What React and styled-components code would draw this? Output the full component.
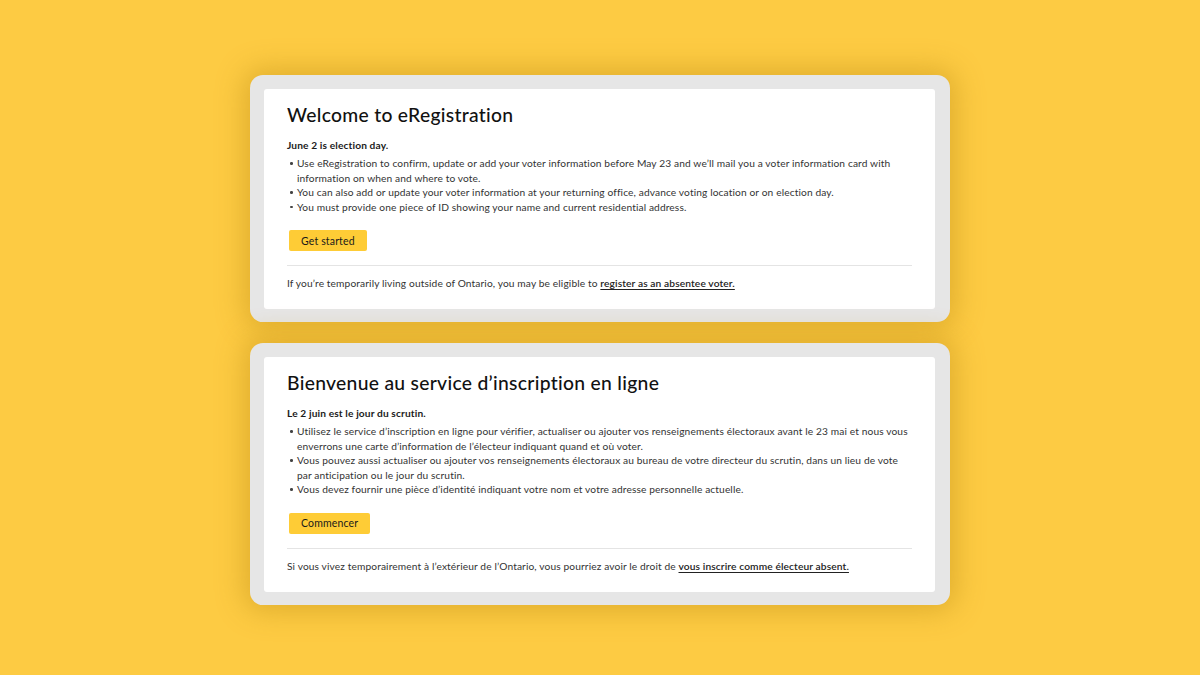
import React from 'react'
import styled, {createGlobalStyle} from 'styled-components'

const GlobalStyle = createGlobalStyle`
    html, body {
        margin: 0;
        padding: 0;
        background: #fdcb43;
    }
    body {
        font-family: "Lato", "Open Sans", sans-serif;
        color: #1a1a1a;
    }
`

const Page = styled.div`
    width: 1200px;
    height: 675px;
    background: #fdcb43;
    display: flex;
    flex-direction: column;
    align-items: center;
    padding-top: 75px;
    gap: 21px;
    box-sizing: border-box;
    overflow: hidden;
`

const Frame = styled.div`
    width: 700px;
    box-sizing: border-box;
    background: #e6e6e6;
    border-radius: 13px;
    padding: 14px 15px 13px 14px;
    box-shadow: 0 0 28px 6px rgba(190, 140, 20, 0.45);
`

const Panel = styled.div`
    background: #fff;
    border-radius: 3px;
    padding: 14px 23px 19px 23px;
`

const Title = styled.h1`
    margin: 0 0 11px 0;
    font-family: "Lato", sans-serif;
    font-weight: 500;
    font-size: 19.3px;
    letter-spacing: 0.3px;
    color: #111;
    line-height: 24px;
`

const Lead = styled.p`
    margin: 0 0 4px 0;
    font-size: 10.2px;
    font-weight: 700;
    letter-spacing: 0.12px;
    line-height: 14px;
    color: #1b1b1b;
`

const List = styled.ul`
    margin: 0;
    padding: 0 0 0 10px;
    list-style: none;
`

const Item = styled.li`
    position: relative;
    font-size: 10.2px;
    letter-spacing: 0.12px;
    line-height: 14.5px;
    color: #333;
    &::before {
        content: "";
        position: absolute;
        left: -7px;
        top: 6px;
        width: 2.5px;
        height: 2.5px;
        border-radius: 50%;
        background: #444;
    }
`

const Button = styled.button`
    margin: 16px 0 14px 2px;
    background: #fecc36;
    border: none;
    border-radius: 2px;
    font-family: "Lato", sans-serif;
    font-size: 10.5px;
    letter-spacing: 0.15px;
    color: #1a1a1a;
    padding: 0 12px;
    height: 21px;
    cursor: pointer;
`

const Divider = styled.hr`
    border: none;
    border-top: 1px solid #e4e4e4;
    margin: 0 0 10px 0;
`

const Footer = styled.p`
    margin: 0;
    font-size: 10.2px;
    letter-spacing: 0.12px;
    line-height: 14px;
    color: #333;
`

const Link = styled.a`
    color: #222;
    font-weight: 600;
    text-decoration: underline;
    text-underline-offset: 2px;
`

export default function App() {
    return (
        <>
            <GlobalStyle />
            <Page>
                <Frame>
                    <Panel>
                        <Title>Welcome to eRegistration</Title>
                        <Lead>June 2 is election day.</Lead>
                        <List>
                            <Item>Use eRegistration to confirm, update or add your voter information before May 23 and we’ll mail you a voter information card with information on when and where to vote.</Item>
                            <Item>You can also add or update your voter information at your returning office, advance voting location or on election day.</Item>
                            <Item>You must provide one piece of ID showing your name and current residential address.</Item>
                        </List>
                        <Button>Get started</Button>
                        <Divider />
                        <Footer>
                            If you’re temporarily living outside of Ontario, you may be eligible to <Link href="#">register as an absentee voter.</Link>
                        </Footer>
                    </Panel>
                </Frame>
                <Frame>
                    <Panel>
                        <Title>Bienvenue au service d’inscription en ligne</Title>
                        <Lead>Le 2 juin est le jour du scrutin.</Lead>
                        <List>
                            <Item>Utilisez le service d’inscription en ligne pour vérifier, actualiser ou ajouter vos renseignements électoraux avant le 23 mai et nous vous enverrons une carte d’information de l’électeur indiquant quand et où voter.</Item>
                            <Item>Vous pouvez aussi actualiser ou ajouter vos renseignements électoraux au bureau de votre directeur du scrutin, dans un lieu de vote par anticipation ou le jour du scrutin.</Item>
                            <Item>Vous devez fournir une pièce d’identité indiquant votre nom et votre adresse personnelle actuelle.</Item>
                        </List>
                        <Button>Commencer</Button>
                        <Divider />
                        <Footer>
                            Si vous vivez temporairement à l’extérieur de l’Ontario, vous pourriez avoir le droit de <Link href="#">vous inscrire comme électeur absent.</Link>
                        </Footer>
                    </Panel>
                </Frame>
            </Page>
        </>
    )
}
